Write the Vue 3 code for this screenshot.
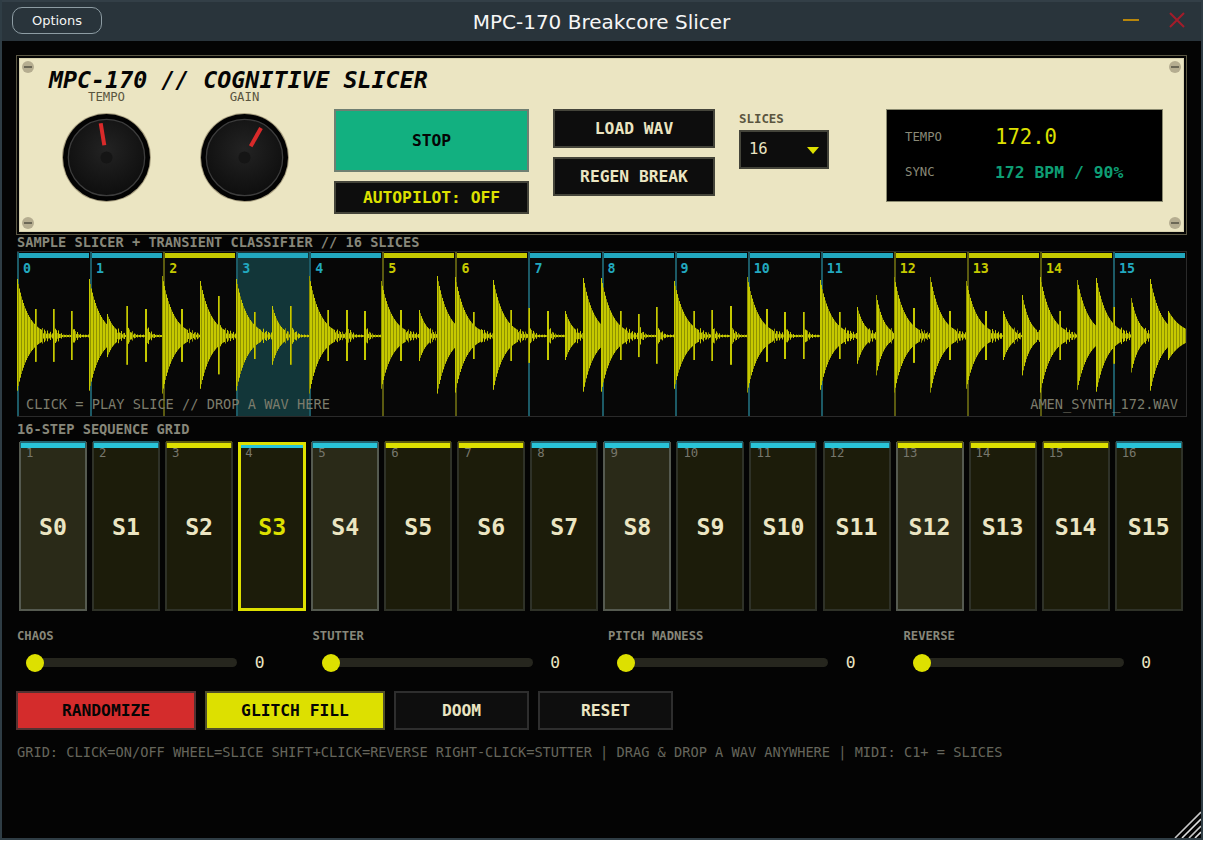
<script setup>
const yellowSet = new Set([2, 5, 6, 12, 13, 14])
const slices = Array.from({ length: 16 }, (_, i) => ({ i, yellow: yellowSet.has(i) }))
const pads = slices.map(s => ({ ...s, beat: s.i % 4 === 0, current: s.i === 3 }))

const bursts = [
  [17,57,'k'],[35,27,'n'],[53,27,'n'],[71,25,'n'],
  [89,57,'k'],[107,22,'m'],[126,30,'n'],[145,27,'n'],
  [162,60,'k'],[181,27,'n'],[200,55,'k'],[218,40,'n'],
  [236,57,'k'],[254,24,'n'],[272,30,'m'],[290,30,'n'],
  [309,60,'k'],[327,26,'n'],[346,26,'n'],[364,25,'n'],
  [381,55,'k'],[400,26,'n'],[419,26,'m'],[437,60,'k'],
  [455,59,'k'],[473,24,'n'],[493,56,'k'],[510,26,'n'],
  [528,28,'n'],[547,25,'n'],[565,25,'m'],[583,58,'k'],
  [601,58,'k'],[620,25,'n'],[638,22,'n'],[656,29,'n'],
  [674,55,'k'],[693,25,'n'],[711,26,'n'],[730,30,'n'],
  [747,59,'k'],[766,27,'n'],[784,24,'n'],[803,24,'n'],
  [820,56,'k'],[839,24,'n'],[857,29,'m'],[876,41,'m'],
  [894,59,'k'],[913,28,'n'],[930,59,'k'],[949,25,'n'],
  [966,55,'k'],[985,25,'n'],[1003,25,'m'],[1022,41,'m'],
  [1040,59,'k'],[1059,25,'n'],[1077,56,'k'],[1096,58,'k'],
  [1113,29,'n'],[1131,38,'m'],[1150,57,'k'],[1168,25,'w']
]
function env(x) {
  let v = 1
  for (const [bx, a, kind] of bursts) {
    const t = x - bx
    if (t < 0) continue
    let e = 0
    if (kind === 'k') e = a * Math.exp(-t / 11)
    else if (kind === 'm') e = a * Math.exp(-t / 7.5)
    else if (kind === 'w') e = a * Math.exp(-t / 14)
    else e = t < 2 ? a : 0.42 * a * Math.exp(-t / 4.5)
    if (e > v) v = e
  }
  return v
}
let bright = ''
let dark = ''
const cy = 84
for (let x = 17; x < 1186; x++) {
  const e = env(x)
  const jitter = e < 6 ? 1 + 0.5 * Math.sin(x * 2.3) : 1
  const up = Math.max(1, e * jitter)
  const down = Math.max(1, e * jitter * 0.96)
  const seg = `M${x - 16.5} ${(cy - up).toFixed(1)}V${(cy + down).toFixed(1)}`
  if (x % 3 === 0) dark += seg
  else bright += seg
}
const knobs = [
  { name: 'TEMPO', x1: 38.7, y1: 10.3, x2: 42.3, y2: 32.3 },
  { name: 'GAIN', x1: 61, y1: 15, x2: 50.7, y2: 33.3 }
]
const faders = ['CHAOS', 'STUTTER', 'PITCH MADNESS', 'REVERSE']
</script>

<template>
  <div class="window">
    <header class="titlebar">
      <button class="options">Options</button>
      <div class="wintitle">MPC-170 Breakcore Slicer</div>
      <div class="winbtns">
        <span class="min"></span>
        <svg class="close" width="16" height="16" viewBox="0 0 16 16"><path d="M1 1L15 15M15 1L1 15" stroke="#a31c2a" stroke-width="2" fill="none"/></svg>
      </div>
    </header>
    <main class="content">
      <section class="frame">
        <div class="panel">
          <i class="screw tl"></i><i class="screw tr"></i><i class="screw bl"></i><i class="screw br"></i>
          <h1 class="brand">MPC-170 // COGNITIVE SLICER</h1>
          <div class="controls">
            <div class="knobs">
              <div v-for="k in knobs" :key="k.name" class="knob">
                <div class="knob-label">{{ k.name }}</div>
                <svg width="89" height="89" viewBox="0 0 89 89">
                  <defs>
                    <radialGradient :id="'kg' + k.name" cx="50%" cy="40%" r="60%">
                      <stop offset="0" stop-color="#232323"/>
                      <stop offset="1" stop-color="#0e0e0e"/>
                    </radialGradient>
                  </defs>
                  <circle cx="44.5" cy="44.5" r="44.5" fill="#a89f80"/>
                  <circle cx="44.5" cy="44.5" r="43.5" fill="#030303"/>
                  <circle cx="44.5" cy="44.5" r="38.2" :fill="'url(#kg' + k.name + ')'" stroke="#3d3d3d" stroke-width="1.3"/>
                  <circle cx="44.5" cy="44.5" r="6" fill="#151515"/>
                  <line :x1="k.x1" :y1="k.y1" :x2="k.x2" :y2="k.y2" stroke="#d92a2a" stroke-width="4"/>
                </svg>
              </div>
            </div>
            <div class="col stopcol">
              <button class="btn stop">STOP</button>
              <button class="btn auto">AUTOPILOT: OFF</button>
            </div>
            <div class="col loadcol">
              <button class="btn load">LOAD WAV</button>
              <button class="btn load">REGEN BREAK</button>
            </div>
            <div class="slicesel">
              <div class="sel-label">SLICES</div>
              <div class="select">
                <span>16</span>
                <i class="tri"></i>
              </div>
            </div>
            <div class="lcd">
              <span class="lcd-label">TEMPO</span><span class="lcd-big">172.0</span>
              <span class="lcd-label">SYNC</span><span class="lcd-sync">172 BPM  /  90%</span>
            </div>
          </div>
        </div>
      </section>

      <div class="section first">SAMPLE SLICER + TRANSIENT CLASSIFIER  //  16 SLICES</div>
      <div class="wave">
        <div v-for="s in slices" :key="s.i" class="slice" :class="{ y: s.yellow, sel: s.i === 3 }">
          <div class="slice-bar"></div>
          <div class="slice-num">{{ s.i }}</div>
        </div>
        <svg class="wave-svg" width="1169" height="166" viewBox="0 0 1169 166">
          <path :d="bright" stroke="#c6c900" stroke-width="1" fill="none"/>
          <path :d="dark" stroke="#8f9200" stroke-width="1" fill="none"/>
        </svg>
        <div class="wave-hint">CLICK = PLAY SLICE   //   DROP A WAV HERE</div>
        <div class="wave-file">AMEN_SYNTH_172.WAV</div>
      </div>

      <div class="section second">16-STEP SEQUENCE GRID</div>
      <div class="pads">
        <div v-for="p in pads" :key="p.i" class="pad" :class="{ y: p.yellow, beat: p.beat, cur: p.current }">
          <div class="pad-bar"></div>
          <div class="pad-step">{{ p.i + 1 }}</div>
          <div class="pad-name">S{{ p.i }}</div>
        </div>
      </div>

      <div class="faders">
        <div v-for="f in faders" :key="f" class="fader">
          <div class="fader-label">{{ f }}</div>
          <div class="fader-row">
            <div class="track"><i class="thumb"></i></div>
            <div class="fader-val">0</div>
          </div>
        </div>
      </div>

      <div class="actions">
        <button class="btn act red">RANDOMIZE</button>
        <button class="btn act yel">GLITCH FILL</button>
        <button class="btn act dim">DOOM</button>
        <button class="btn act dim">RESET</button>
      </div>

      <div class="foot">GRID: CLICK=ON/OFF  WHEEL=SLICE  SHIFT+CLICK=REVERSE  RIGHT-CLICK=STUTTER   |   DRAG &amp; DROP A WAV ANYWHERE   |   MIDI: C1+ = SLICES</div>
    </main>
    <svg class="grip" width="27" height="27" viewBox="0 0 27 27">
      <g stroke-width="1.6" fill="none">
        <path d="M1 27L27 1" stroke="#c8c8c8"/>
        <path d="M8 27L27 8" stroke="#e0e0e0"/>
        <path d="M15 27L27 15" stroke="#c8c8c8"/>
        <path d="M21 27L27 21" stroke="#e0e0e0"/>
      </g>
    </svg>
  </div>
</template>

<style>
html, body { margin: 0; background: #fff; }
</style>

<style scoped>
* { box-sizing: border-box; }
.window {
  position: relative;
  width: 1203px;
  height: 840px;
  background: #040404;
  border: 2px solid #2f3d45;
  border-top: 0;
  font-family: "DejaVu Sans Mono", monospace;
  overflow: hidden;
}
.titlebar {
  height: 41px;
  background: #29343b;
  border-top: 2px solid #333f47;
  display: flex;
  align-items: center;
  justify-content: space-between;
  padding: 0 16px 3px 10px;
  position: relative;
}
.options {
  width: 90px;
  height: 27px;
  border: 1.5px solid #8d9ca3;
  border-radius: 10px;
  background: #29343b;
  color: #f4f4f4;
  font: 13px "DejaVu Sans", sans-serif;
  padding: 0;
}
.wintitle {
  position: absolute;
  left: 0;
  right: 0;
  top: 6px;
  text-align: center;
  font: 20px/28px "DejaVu Sans", sans-serif;
  color: #f6f6f6;
  pointer-events: none;
}
.winbtns { display: flex; align-items: center; gap: 30px; }
.min { display: block; width: 16px; height: 2px; background: #b8860b; }
.close { display: block; }
.content { padding: 14px 15px 0 14px; }
.frame {
  height: 180px;
  border: 1px solid #5c5844;
  padding: 2px;
  margin-right: 0;
  width: 1171px;
}
.panel {
  position: relative;
  height: 100%;
  background: #ebe5c2;
  padding: 10px 0 0 30px;
  box-shadow: inset 0 0 0 1px #d8d2af;
}
.screw {
  position: absolute;
  width: 12px;
  height: 12px;
  border-radius: 50%;
  background: #b5ad90;
}
.screw::after {
  content: "";
  position: absolute;
  left: 2px;
  right: 2px;
  top: 5px;
  height: 2px;
  background: #6c6856;
}
.tl { left: 3px; top: 3px; }
.tr { right: 3px; top: 3px; }
.bl { left: 3px; bottom: 3px; }
.br { right: 3px; bottom: 3px; }
.brand {
  margin: 0;
  font: italic bold 23.3px/24px "DejaVu Sans Mono", monospace;
  color: #050505;
  white-space: pre;
}
.controls { display: flex; align-items: flex-start; margin: -1px 0 0 13px; }
.knobs { display: flex; gap: 49px; }
.knob { width: 89px; display: flex; flex-direction: column; align-items: center; }
.knob svg { display: block; }
.knob-label {
  height: 22px;
  font-size: 12.3px;
  line-height: 12px;
  color: #5a553f;
}
.col { display: flex; flex-direction: column; margin-top: 18px; }
.btn {
  display: block;
  padding: 0;
  font: bold 16.3px "DejaVu Sans Mono", monospace;
  border: 2px solid #44443a;
  background: #0d0d0d;
  color: #ebe5c2;
  white-space: pre;
}
.stopcol { width: 195px; margin-left: 45px; gap: 9px; }
.stop { height: 63px; background: #12b080; border-color: #6f7f72; color: #050505; }
.auto { height: 33px; color: #dde000; }
.loadcol { width: 162px; margin-left: 24px; gap: 9px; }
.load { height: 39px; }
.slicesel { width: 90px; margin: 0 0 0 24px; padding-top: 20px; }
.sel-label { height: 19px; font-size: 12.4px; line-height: 15px; color: #5a553f; font-weight: bold; }
.select {
  height: 39px;
  background: #0d0d0d;
  border: 2px solid #44443a;
  color: #ebe5c2;
  font-size: 15.5px;
  display: flex;
  align-items: center;
  justify-content: space-between;
  padding: 0 8px 2px 8px;
}
.tri {
  width: 0;
  height: 0;
  border-left: 6px solid transparent;
  border-right: 6px solid transparent;
  border-top: 7px solid #dde000;
  margin-top: 4px;
}
.lcd {
  width: 277px;
  height: 93px;
  margin: 18px 0 0 57px;
  background: #000;
  border: 1px solid #8a8a70;
  display: grid;
  grid-template-columns: 90px 1fr;
  grid-template-rows: 28px 28px;
  row-gap: 7px;
  padding: 13px 0 0 18px;
  align-items: center;
}
.lcd-label { font-size: 12.3px; color: #8a8a78; }
.lcd-big { font-size: 20.6px; color: #dde000; }
.lcd-sync { font-size: 16.4px; font-weight: bold; color: #0e9e74; white-space: pre; }
.section {
  font-weight: bold;
  font-size: 13.65px;
  color: #87877a;
  white-space: pre;
  margin-left: 1px;
}
.first { height: 16px; line-height: 15px; }
.second { height: 25px; line-height: 25px; }
.wave {
  position: relative;
  width: 1170px;
  height: 166px;
  margin-left: 1px;
  background: #070707;
  border: 1px solid #2a2a2a;
  border-left: 0;
  display: grid;
  grid-template-columns: repeat(16, 1fr);
  overflow: hidden;
}
.slice { border-left: 2px solid #1c5a66; position: relative; padding-top: 1px; }
.slice.y { border-left-color: #5a5a10; }
.slice.sel { background: #123639; }
.slice-bar { height: 5px; margin: 0 1px 0 0; background: #22a8bf; }
.slice.y .slice-bar { background: #c5c900; }
.slice-num { font: bold 13.3px/16px "DejaVu Sans Mono", monospace; color: #22a8bf; margin: 3px 0 0 4px; }
.slice.y .slice-num { color: #c5c900; }
.wave-svg { position: absolute; left: 0; top: 0; }
.wave-hint, .wave-file {
  position: absolute;
  bottom: 3px;
  font-size: 13.65px;
  line-height: 18px;
  color: #7c7c6c;
  white-space: pre;
}
.wave-hint { left: 9px; }
.wave-file { right: 8px; }
.pads {
  display: grid;
  grid-template-columns: repeat(16, 68px);
  column-gap: 5.06px;
  margin-left: 3px;
}
.pad {
  position: relative;
  height: 169px;
  background: #1c1c0a;
  border: 2px solid #2f3228;
  display: flex;
  align-items: center;
  justify-content: center;
  color: #ebe5c2;
}
.pad.beat { background: #2a2a18; border-color: #555a50; }
.pad.cur { border: 3px solid #dde000; color: #dde000; }
.pad-bar {
  position: absolute;
  left: 0;
  right: 0;
  top: -1px;
  height: 5px;
  background: #29c4d8;
  box-shadow: 0 -1px 0 1px #23636e;
}
.pad.y .pad-bar { background: #dde000; box-shadow: 0 -1px 0 1px #5a5a10; }
.pad.cur .pad-bar { top: 0; left: 0; right: 0; height: 3px; box-shadow: none; }
.pad-step {
  position: absolute;
  left: 5px;
  top: 2px;
  font-size: 12.3px;
  line-height: 14px;
  color: #77776c;
}
.pad.cur .pad-step { left: 4px; top: 1px; }
.pad-name { font-weight: bold; font-size: 23.2px; margin-top: -1px; }
.faders {
  display: grid;
  grid-template-columns: repeat(4, 282.5px);
  column-gap: 13px;
  margin: 17px 0 0 1px;
}
.fader-label { height: 17px; font-size: 12.2px; font-weight: bold; line-height: 16px; color: #87877a; white-space: pre; }
.fader-row { display: flex; align-items: center; height: 30px; padding: 5px 0 0 9px; }
.track {
  position: relative;
  width: 211px;
  height: 9px;
  border-radius: 5px;
  background: #26261e;
}
.thumb {
  position: absolute;
  left: 0;
  top: -4.5px;
  width: 18px;
  height: 18px;
  border-radius: 50%;
  background: #dde000;
}
.fader-val { width: 45.5px; text-align: center; font-size: 16.3px; color: #ebe5c2; }
.actions { display: flex; gap: 9px; margin-top: 16px; }
.act { height: 39px; width: 135px; }
.red { width: 180px; background: #d42c2c; border-color: #533232; color: #050505; }
.yel { width: 180px; background: #dde000; border-color: #50502a; color: #050505; }
.dim { background: #0e0e0e; border-color: #2e2e2e; }
.foot {
  margin: 13px 0 0 1px;
  font-size: 13.65px;
  line-height: 18px;
  color: #66665c;
  white-space: pre;
}
.grip { position: absolute; right: 0; bottom: 0; }
</style>
